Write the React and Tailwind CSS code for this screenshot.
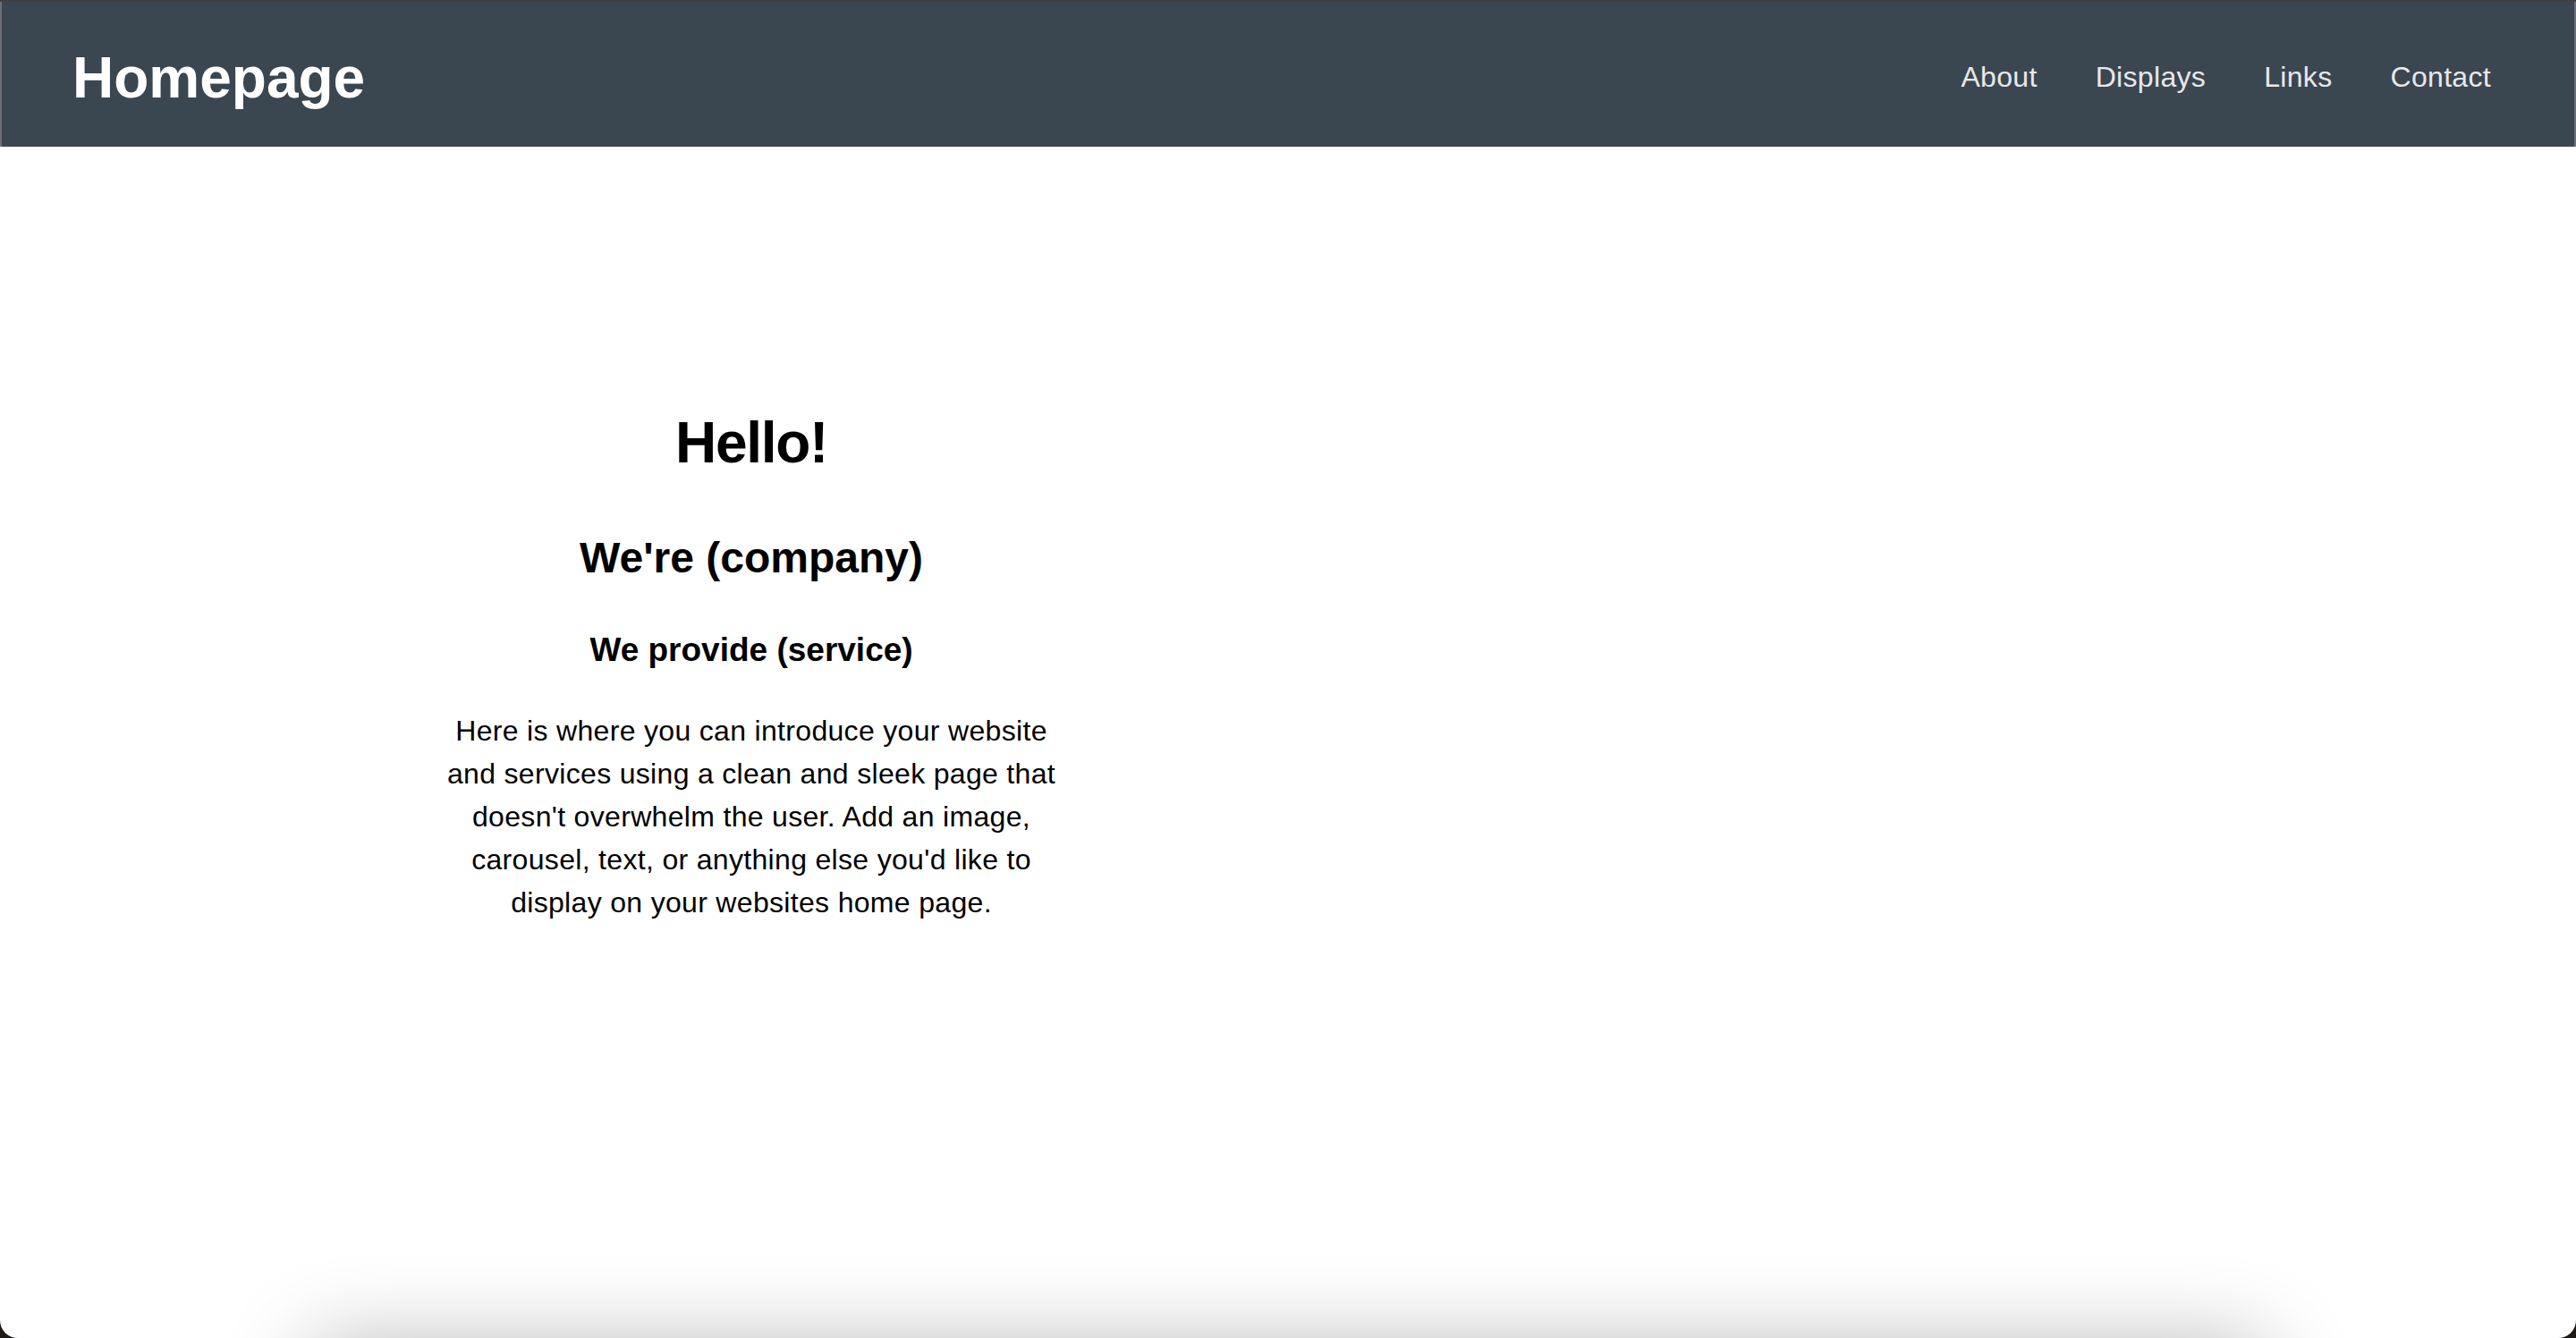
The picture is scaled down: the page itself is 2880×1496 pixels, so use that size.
import React from 'react';

const links = ['About', 'Displays', 'Links', 'Contact'];

const Header = () => {
  return (
    <header className="shrink-0 h-[162px] bg-[#3a4650] border-x-2 border-[#6b7177] flex items-center justify-between pl-[79px] pr-[93px] pt-2">
      <h1 className="text-[64px] leading-[1.2] font-bold text-white">Homepage</h1>
      <nav className="flex gap-[65px] -mt-[3px]">
        {links.map((l) => (
          <a key={l} href="#" className="text-[32px] leading-[1.5] text-[#e8e8e8] tracking-[0.01em]">
            {l}
          </a>
        ))}
      </nav>
    </header>
  );
};

const App = () => {
  return (
    <div className="h-screen bg-[#1d1a18]" style={{ fontFamily: '"Liberation Sans", Arial, sans-serif' }}>
      <div className="h-[1496px] flex flex-col overflow-hidden rounded-b-[20px] bg-white">
        <div className="shrink-0 h-[2px] bg-[#3f3f40]" />
        <Header />
        <main className="shrink-0 h-[1342px] pt-[293px]">
          <div className="max-w-[2400px] mx-auto grid grid-cols-2">
            <div className="flex flex-col items-center text-center text-black">
              <h2 className="text-[64px] leading-[1.2] font-bold tracking-[-0.02em]">Hello!</h2>
              <h3 className="mt-[61px] text-[48px] leading-[1.2] font-bold">We're (company)</h3>
              <h4 className="mt-[53px] text-[37px] leading-[1.2] font-bold">We provide (service)</h4>
              <p className="mt-[43px] w-[690px] text-[32px] leading-[1.5] tracking-[0.01em]">
                Here is where you can introduce your website and services using a clean and sleek page
                that doesn't overwhelm the user. Add an image, carousel, text, or anything else you'd
                like to display on your websites home page.
              </p>
            </div>
            <div />
          </div>
        </main>
        <footer className="shrink-0 mx-[350px] h-[300px] bg-white shadow-[0_0_100px_rgba(0,0,0,0.3)]" />
      </div>
    </div>
  );
};

export default App;
